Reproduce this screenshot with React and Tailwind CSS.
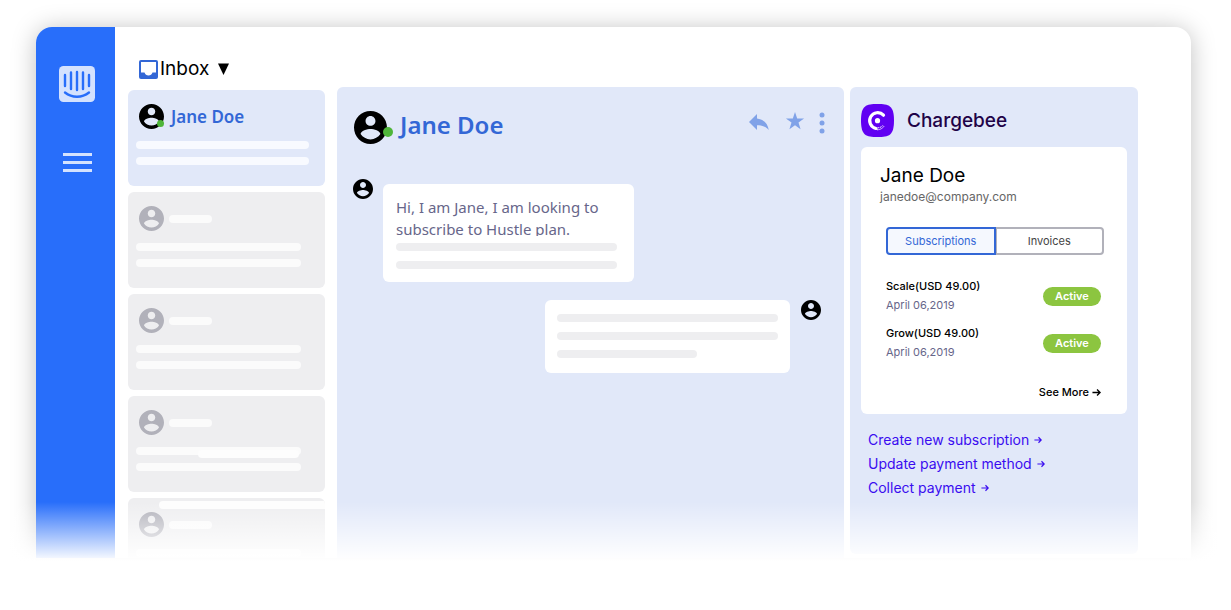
import React from "react";
import { useState } from "react";

const threads = [
    { id: 1, name: 'Jane Doe', online: true },
    { id: 2 },
    { id: 3 },
    { id: 4, overlay: 'left-[70px] top-[54px] w-[101px]' },
    { id: 5, overlay: 'left-[31px] top-[3px] right-0 rounded-r-none', cut: true },
]

const subscriptions = [
    { plan: 'Scale(USD 49.00)', date: 'April 06,2019', status: 'Active' },
    { plan: 'Grow(USD 49.00)', date: 'April 06,2019', status: 'Active' },
]

const actions = ['Create new subscription', 'Update payment method', 'Collect payment']

const Avatar = ({ className }) => (
    <svg viewBox="2 2 20 20" fill="currentColor" className={`shrink-0 ${className}`} aria-hidden="true">
        <path d="M12 2C6.48 2 2 6.48 2 12s4.48 10 10 10 10-4.48 10-10S17.52 2 12 2zm0 3c1.66 0 3 1.34 3 3s-1.34 3-3 3-3-1.34-3-3 1.34-3 3-3zm0 14.2c-2.5 0-4.71-1.28-6-3.22.03-1.99 4-3.08 6-3.08 1.99 0 5.97 1.09 6 3.08-1.29 1.94-3.5 3.22-6 3.22z" />
    </svg>
);

const Arrow = ({ className }) => (
    <svg viewBox="0 0 10 10" fill="none" stroke="currentColor" strokeWidth="1.5" className={className} aria-hidden="true">
        <path d="M0.5 5H9M5.6 1.6L9 5L5.6 8.4" />
    </svg>
);

const Bar = ({ className }) => <div className={`h-2 rounded-full ${className}`} />;

const Sidebar = () => (
    <nav className="flex w-[79px] shrink-0 flex-col items-center rounded-tl-2xl bg-[#286efa] pt-[39px] pl-[3px] text-[#d4e2fe]">
        <a href="#home" aria-label="Home">
            <svg viewBox="0 0 36 36" className="size-9">
                <rect width="36" height="36" rx="4.5" fill="currentColor" />
                <g stroke="#286efa" strokeWidth="2.4" strokeLinecap="round" fill="none">
                    <path d="M6 9v11M12 6.5v16.500M18 6v18M24 6.500v16.500M30 9v11" />
                    <path d="M6 26.500c7 5.600 17 5.600 24 0" />
                </g>
            </svg>
        </a>
        <button className="mt-[51px] flex w-[29px] flex-col gap-[5px]" aria-label="Menu">
            <span className="h-[3px] w-full bg-current"></span>
            <span className="h-[3px] w-full bg-current"></span>
            <span className="h-[3px] w-full bg-current"></span>
        </button>
    </nav>
);

const ThreadCard = ({ thread }) => {
    const active = !!thread.name
    return (
        <li className={`relative overflow-hidden px-2 pt-[14px] ${active ? 'bg-[#e1e8f9]' : 'bg-[#eeeef0]'} ${thread.cut ? 'h-[60px] rounded-t-md' : 'h-24 rounded-md'}`}>
            <div className="flex items-center gap-[5px] pl-[3px]">
                <div className="relative">
                    <Avatar className={`size-[25px] ${active ? 'text-black' : 'text-[#b1b1ba]'}`} />
                    {thread.online ? <span className="absolute right-0 bottom-[2px] size-[7px] rounded-full bg-[#4fb53a]"></span> : null}
                </div>
                {active
                    ? <a href="#jane" className="pl-[2px] font-['Noto_Sans',sans-serif] text-[17px] leading-6 font-semibold text-[#3367d6]">{thread.name}</a>
                    : <Bar className="w-[43px] bg-[#fbfbfb]" />}
            </div>
            <Bar className={`mt-3 ${active ? 'mr-2 bg-[#f8faff]' : 'mr-4 bg-[#fbfbfb]'}`} />
            <Bar className={`mt-2 ${active ? 'mr-2 bg-[#f8faff]' : 'mr-4 bg-[#fbfbfb]'}`} />
            {thread.overlay ? <div className={`absolute h-2 rounded-full bg-[#fdfdfd] ${thread.overlay}`}></div> : null}
        </li>
    );
};

const Inbox = () => (
    <section className="w-[197px] shrink-0 pt-[30px]">
        <label className="flex h-6 items-center pl-[11px] text-black">
            <svg viewBox="0 0 19 19" className="mr-[2px] size-[19px]" aria-hidden="true">
                <rect width="19" height="19" rx="2" fill="#3367d6" />
                <path d="M2 2h15v10.500h-3.500c-.6 1.800-2 3-4 3s-3.400-1.200-4-3H2z" fill="#fff" />
            </svg>
            <select className="field-sizing-content appearance-none bg-transparent text-[19px] leading-6" aria-label="Mailbox">
                <option>Inbox</option>
            </select>
            <svg viewBox="0 0 11 12" className="ml-[9px] h-3 w-[11px]" aria-hidden="true">
                <path d="M0 0.500h11L5.500 12z" />
            </svg>
        </label>
        <ul className="mt-[9px] flex flex-col gap-[6px]">
            {threads.map((thread) => <ThreadCard key={thread.id} thread={thread} />)}
        </ul>
    </section>
);

const Conversation = () => (
    <section className="min-w-0 flex-1 rounded-t-md bg-[#e1e8f9] pt-6 pr-[18px] pl-4">
        <header className="flex items-start pl-px">
            <div className="relative">
                <Avatar className="size-[33px] text-black" />
                <span className="absolute -right-[6px] bottom-[7px] size-[10px] rounded-full bg-[#4fb53a]"></span>
            </div>
            <h1 className="ml-[13px] font-['Noto_Sans',sans-serif] text-2xl leading-7 font-semibold text-[#3367d6]">Jane Doe</h1>
            <div className="ml-auto flex items-start text-[#80a2e8]">
                <button className="p-px" aria-label="Reply">
                    <svg viewBox="0 -2 20 20" fill="currentColor" className="size-5">
                        <path d="M8 4.500V0L0 8l8 8v-4.700c5 0 8.800 1.300 11.800 4.700C18.800 10 15.500 5.500 8 4.500z" />
                    </svg>
                </button>
                <button className="ml-[14px] p-px" aria-label="Favourite">
                    <svg viewBox="2 2 20 19" fill="currentColor" className="h-[18px] w-5">
                        <path d="M12 2l2.300 6.900h7.300l-5.900 4.300 2.200 7L12 16l-5.900 4.200 2.200-7L2.400 8.900h7.300z" />
                    </svg>
                </button>
                <button className="ml-3 p-px" aria-label="More">
                    <svg viewBox="0 0 6 22" fill="currentColor" className="h-[22px] w-[6px]">
                        <circle cx="3" cy="3" r="2.500" />
                        <circle cx="3" cy="11" r="2.500" />
                        <circle cx="3" cy="19" r="2.500" />
                    </svg>
                </button>
            </div>
        </header>
        <div className="mt-[35px] flex items-start gap-[10px]">
            <Avatar className="size-5 text-black" />
            <div className="mt-[5px] w-[251px] rounded-md bg-white px-[13px] pt-3 pb-[13px]">
                <p className="h-10 overflow-hidden font-['Noto_Sans',sans-serif] text-[15px] leading-[22px] whitespace-nowrap text-[#67668a]">
                    Hi, I am Jane, I am looking to<br />subscribe to Hustle plan.
                </p>
                <Bar className="mt-[7px] w-[221px] bg-[#eeeef0]" />
                <Bar className="mt-[10px] w-[221px] bg-[#eeeef0]" />
            </div>
        </div>
        <div className="mt-[18px] flex items-start justify-end gap-[11px] pr-[5px]">
            <div className="flex w-[245px] flex-col gap-[10px] rounded-md bg-white px-3 pt-[14px] pb-[15px]">
                <Bar className="bg-[#eeeef0]" />
                <Bar className="bg-[#eeeef0]" />
                <Bar className="w-[140px] bg-[#eeeef0]" />
            </div>
            <Avatar className="size-5 text-black" />
        </div>
    </section>
);

const ChargebeePanel = () => {

    const [tab, setTab] = useState('Subscriptions')

    return (
        <aside className="mb-1 w-[288px] shrink-0 rounded-md bg-[#e1e8f9] px-[11px] pt-[17px]">
            <div className="flex items-center gap-[13px]">
                <svg viewBox="0 0 33 33" className="size-[33px]" aria-hidden="true">
                    <path d="M16.500 0C28 0 33 1.500 33 16.500S28 33 16.500 33 0 31.500 0 16.500 5 0 16.500 0z" fill="#6100f2" />
                    <path d="M22.500 11.200A8 8 0 1 0 15 24.500" fill="none" stroke="#fff" strokeWidth="3.200" strokeLinecap="round" />
                    <circle cx="16.500" cy="16.700" r="2.600" fill="#fff" />
                    <path d="M16 25.800c3 0 5.500-1.200 7.200-3.800M16.500 23.800c2.500 0 4.300-.9 5.500-2.700" fill="none" stroke="#fff" strokeWidth="0.900" strokeDasharray="1.600 0.600" />
                </svg>
                <h2 className="text-[19px] leading-6 font-medium text-[#1f0348]">Chargebee</h2>
            </div>
            <div className="mt-[10px] rounded-md bg-white pt-[17px] pr-[23px] pb-3 pl-[25px]">
                <div className="-ml-[6px]">
                    <h3 className="text-[19px] leading-6 text-black">Jane Doe</h3>
                    <p className="text-xs leading-[18px] text-[#666]">janedoe@company.com</p>
                </div>
                <div className="mt-[21px] flex h-7 text-[11px]">
                    {['Subscriptions', 'Invoices'].map((name) => (
                        <button
                            key={name}
                            className={`flex-1 border-2 first:rounded-l last:-ml-px last:rounded-r ${tab === name ? 'z-10 border-[#3367d6] bg-[#f5f8fe] text-[#3367d6]' : 'border-[#b1b1ba] bg-white text-[#444]'}`}
                            onClick={() => setTab(name)}
                        >
                            {name}
                        </button>
                    ))}
                </div>
                <ul className="mt-[22px] flex flex-col gap-[9px] pr-[3px]">
                    {subscriptions.map((item) => (
                        <li key={item.plan} className="flex items-center justify-between text-[11px] leading-[19px]">
                            <div>
                                <div className="font-medium text-black">{item.plan}</div>
                                <div className="text-[#67668a]">{item.date}</div>
                            </div>
                            <span className="w-[58px] rounded-full bg-[#8cc540] text-center leading-[19px] font-semibold text-white">{item.status}</span>
                        </li>
                    ))}
                </ul>
                <a href="#more" className="mt-5 flex items-center justify-end gap-[3px] pr-[3px] text-[11px] leading-5 font-medium text-black">
                    See More <Arrow className="size-[9px]" />
                </a>
            </div>
            <ul className="mt-[14px] pl-[7px] text-sm leading-6 text-[#3a0cf0]">
                {actions.map((action) => (
                    <li key={action}>
                        <a href="#action" className="flex items-center gap-[5px]">{action} <Arrow className="size-2" /></a>
                    </li>
                ))}
            </ul>
        </aside>
    );
};

const App = () => {
    return (
        <div className="relative bg-white pt-[27px] pr-10 pb-[52px] pl-9 font-['Inter',sans-serif]">
            <div className="flex rounded-t-2xl bg-white shadow-[0_2px_24px_rgba(0,0,0,0.25)]">
                <Sidebar />
                <main className="flex min-w-0 flex-1 pr-[53px] pl-[13px]">
                    <Inbox />
                    <div className="ml-3 flex min-w-0 flex-1 gap-[6px] pt-[60px]">
                        <Conversation />
                        <ChargebeePanel />
                    </div>
                </main>
            </div>
            {/* fades the window out towards the bottom */}
            <div className="pointer-events-none absolute inset-x-0 bottom-0 z-20 h-[108px] bg-linear-to-b from-white/0 to-white to-55%"></div>
        </div>
    );
};

export default App;
